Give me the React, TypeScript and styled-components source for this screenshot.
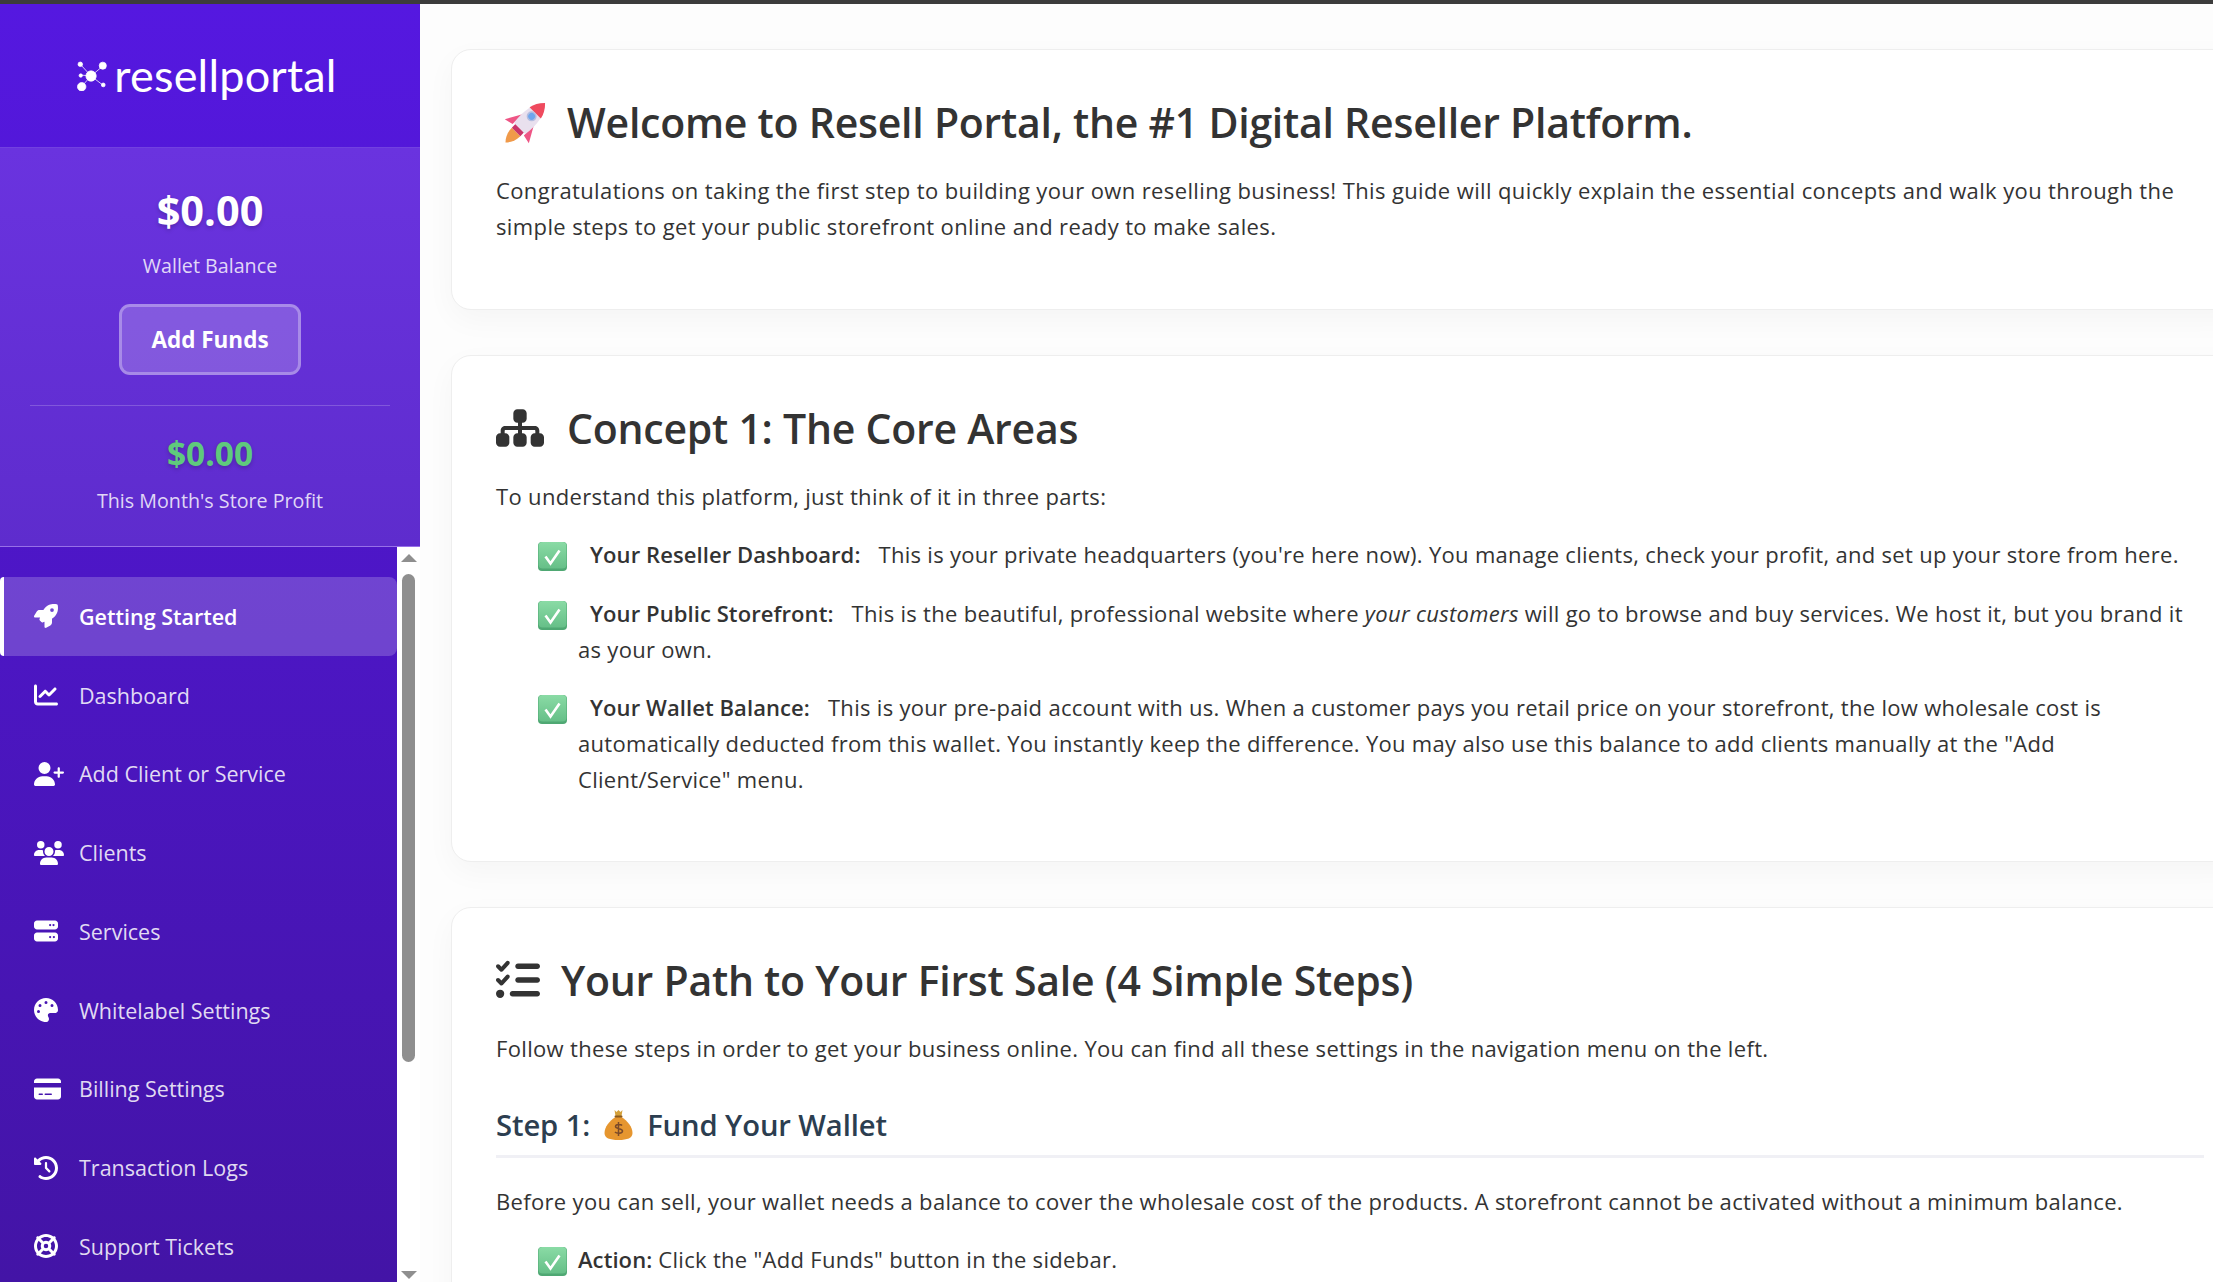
import React from 'react';
import styled, { createGlobalStyle } from 'styled-components';
import {
  FaRocket,
  FaChartLine,
  FaUserPlus,
  FaUsers,
  FaServer,
  FaPalette,
  FaCreditCard,
  FaClockRotateLeft,
  FaLifeRing,
  FaSitemap,
  FaListCheck,
} from 'react-icons/fa6';

const GlobalStyle = createGlobalStyle`
  html, body {
    margin: 0;
    padding: 0;
    height: 100%;
    overflow: hidden;
    background: #fff;
    font-family: "Open Sans", "Noto Sans", sans-serif;
  }
`;

const Page = styled.div`
  width: 2213px;
  height: 1282px;
  overflow: hidden;
  display: flex;
  flex-direction: column;
`;

const TopBar = styled.div`
  height: 4px;
  flex: none;
  background: #3c3c3c;
`;

const Body = styled.div`
  flex: 1;
  min-height: 0;
  display: flex;
`;

const Sidebar = styled.aside`
  width: 420px;
  flex: none;
  display: flex;
  flex-direction: column;
  background: linear-gradient(180deg, #5518e0 0%, #4314a6 100%);
`;

const LogoBar = styled.div`
  height: 144px;
  flex: none;
  display: flex;
  align-items: center;
  justify-content: center;
  gap: 7px;
  padding-right: 6px;
  box-sizing: border-box;
  border-bottom: 1px solid rgba(255, 255, 255, 0.18);
`;

const LogoText = styled.span`
  font-family: "Lato", sans-serif;
  font-weight: 400;
  font-size: 45px;
  line-height: 1;
  letter-spacing: 0.2px;
  color: #fff;
  margin-top: -1px;
`;

const WalletPanel = styled.section`
  height: 399px;
  flex: none;
  box-sizing: border-box;
  padding: 36px 30px 0;
  display: flex;
  flex-direction: column;
  align-items: center;
  background: linear-gradient(180deg, #6a33df 0%, #5e2ccd 100%);
  border-bottom: 1px solid rgba(255, 255, 255, 0.3);
  color: #fff;
`;

const Amount = styled.div<{ $green?: boolean }>`
  font-weight: 700;
  font-size: ${(p) => (p.$green ? '33.5px' : '41.5px')};
  line-height: ${(p) => (p.$green ? '44px' : '52px')};
  margin-bottom: ${(p) => (p.$green ? '12px' : '16px')};
  color: ${(p) => (p.$green ? '#5fca7c' : '#fff')};
  text-shadow: 0 2px 4px rgba(0, 0, 0, 0.2);
`;

const AmountLabel = styled.div`
  font-size: 19.7px;
  line-height: 28px;
  color: rgba(255, 255, 255, 0.82);
`;

const FundsButton = styled.button`
  margin-top: 24px;
  width: 182px;
  height: 71px;
  box-sizing: border-box;
  border: 3px solid rgba(255, 255, 255, 0.3);
  border-radius: 11px;
  background: rgba(255, 255, 255, 0.2);
  color: #fff;
  font: 700 22.5px "Open Sans", sans-serif;
`;

const PanelDivider = styled.hr`
  align-self: stretch;
  margin: 30px 0 25px;
  border: 0;
  border-top: 1px solid rgba(255, 255, 255, 0.2);
`;

const NavArea = styled.div`
  flex: 1;
  min-height: 0;
  display: flex;
`;

const NavList = styled.nav`
  flex: 1;
  padding-top: 30px;
  overflow: hidden;
`;

const NavItem = styled.a<{ $active?: boolean }>`
  height: 78.75px;
  box-sizing: border-box;
  display: flex;
  align-items: center;
  padding-left: ${(p) => (p.$active ? '30px' : '34px')};
  font-size: 21.5px;
  font-weight: ${(p) => (p.$active ? 600 : 400)};
  color: ${(p) => (p.$active ? '#fff' : 'rgba(255, 255, 255, 0.85)')};
  background: ${(p) => (p.$active ? 'rgba(255, 255, 255, 0.2)' : 'transparent')};
  border-left: ${(p) => (p.$active ? '4px solid #fff' : '0')};
  border-radius: ${(p) => (p.$active ? '4px 8px 8px 4px' : '0')};
`;

const IconSlot = styled.span<{ $iconWidth: number }>`
  width: 45px;
  flex: none;
  display: flex;
  align-items: center;
  color: #fff;

  svg {
    width: ${(p) => p.$iconWidth}px;
    height: 24px;
  }
`;

const ScrollTrack = styled.div`
  width: 23px;
  flex: none;
  background: #fff;
  display: flex;
  flex-direction: column;
  align-items: center;
  padding: 6px 0 2px;
  box-sizing: border-box;
`;

const ScrollThumb = styled.div`
  width: 13px;
  height: 488px;
  background: #8f8f8f;
  border-radius: 7px;
  margin-top: 11px;
`;

const ScrollSpacer = styled.div`
  flex: 1;
`;

const Main = styled.main`
  flex: 1;
  min-width: 0;
  overflow: hidden;
  background: #fdfdfd;
  padding: 45px 0 0 31px;
  color: #333;
`;

const Card = styled.section`
  width: 1798px;
  box-sizing: border-box;
  padding: 45px 44px;
  margin-bottom: 45px;
  background: #fff;
  border: 1px solid #eeeeee;
  border-radius: 20px;
  box-shadow: 0 10px 30px rgba(0, 0, 0, 0.035);
`;

const CardTitle = styled.h2<{ $gap: number }>`
  display: flex;
  align-items: center;
  gap: ${(p) => p.$gap}px;
  margin: 0 0 23px;
  height: 54px;
  font-size: 41px;
  font-weight: 600;
  letter-spacing: -0.25px;
  white-space: nowrap;
  color: #333;

  > svg {
    flex: none;
  }
`;

const Para = styled.p`
  margin: 0 0 22px;
  font-size: 22px;
  letter-spacing: 0.33px;
  line-height: 36px;
  white-space: nowrap;
  color: #333;
`;

const IntroPara = styled(Para)`
  margin-bottom: 20px;
  letter-spacing: 0.38px;
`;

const CheckList = styled.ul`
  list-style: none;
  margin: 0 0 19px;
  padding: 0 0 0 82px;
`;

const CheckItem = styled.li`
  position: relative;
  margin-bottom: 22.5px;
  font-size: 22px;
  letter-spacing: 0.3px;
  line-height: 36px;
  white-space: nowrap;
  color: #333;

  &:last-child {
    margin-bottom: 0;
  }
`;

const CheckMark = styled.svg`
  position: absolute;
  left: -40px;
  top: 6px;
  width: 29px;
  height: 29px;
`;

const Label = styled.strong<{ $spaced?: boolean }>`
  font-weight: 600;
  letter-spacing: 0.08px;
  margin-left: ${(p) => (p.$spaced ? '12px' : '0')};
  margin-right: ${(p) => (p.$spaced ? '18px' : '0')};
`;

const StepTitle = styled.h3`
  display: flex;
  align-items: center;
  gap: 14px;
  margin: 36px 0 25px;
  padding-bottom: 8px;
  box-sizing: border-box;
  border-bottom: 3px solid #f0f0f5;
  height: 56px;
  font-size: 29.2px;
  font-weight: 600;
  letter-spacing: -0.1px;
  color: #2c3e50;
  white-space: nowrap;
`;

const RocketSvg = styled.svg`
  margin-left: 9px;
  overflow: visible;
`;

const RocketEmoji = () => (
  <RocketSvg width="42" height="42" viewBox="0 0 42 42">
    <g transform="rotate(45 21 21)">
      <path d="M15 35h12c0 7-3 12-6 15-3-3-6-8-6-15z" fill="#f09a4a" />
      <path d="M13 18L4 34l9-2zM29 18l9 16-9-2z" fill="#ee5585" />
      <rect x="15" y="30" width="12" height="5" fill="#c9356a" />
      <path d="M21-6c8 8 10 20 8 36H13c-2-16 0-28 8-36z" fill="#e9e0ee" />
      <path d="M21-6c4.500 4.500 7 9 8 14H13c1-5 3.500-9.500 8-14z" fill="#ef4a5e" />
      <circle cx="21" cy="13" r="5" fill="#b3bde0" />
      <circle cx="21" cy="13" r="3.400" fill="#6ea6ee" />
    </g>
  </RocketSvg>
);

const MoneyBag = () => (
  <svg width="29" height="30" viewBox="0 0 28 30">
    <path d="M10 0l2 2 2-2 2 2 2-2-1 6h-6z" fill="#d4a03a" />
    <path d="M11 7C5 11 0 17 0 23c0 5 5 7 14 7s14-2 14-7c0-6-5-12-11-16z" fill="#e6962f" />
    <rect x="10" y="5.500" width="8" height="2" rx="1" fill="#8a5a20" />
    <path d="M14 12v14M17.500 15.500c-1-1.600-6.500-1.600-6.500 1s7 1.800 7 4.500-6 2.800-7.500 1" stroke="#7a4a2a" strokeWidth="1.500" fill="none" />
  </svg>
);

const Check = () => (
  <CheckMark viewBox="0 0 29 29">
    <defs>
      <linearGradient id="checkFill" x1="0" y1="0" x2="0" y2="1">
        <stop offset="0" stopColor="#8adba5" />
        <stop offset="1" stopColor="#66bf88" />
      </linearGradient>
    </defs>
    <rect x="0" y="0" width="29" height="29" rx="4" fill="#4fa873" />
    <rect x="0.500" y="0" width="28" height="26.500" rx="4" fill="url(#checkFill)" />
    <path d="M7.500 14.500l5 7 9-13" stroke="#fff" strokeWidth="2.600" fill="none" />
  </CheckMark>
);

const navItems = [
  { label: 'Getting Started', icon: FaRocket, iconWidth: 24, active: true },
  { label: 'Dashboard', icon: FaChartLine, iconWidth: 24 },
  { label: 'Add Client or Service', icon: FaUserPlus, iconWidth: 30 },
  { label: 'Clients', icon: FaUsers, iconWidth: 30 },
  { label: 'Services', icon: FaServer, iconWidth: 24 },
  { label: 'Whitelabel Settings', icon: FaPalette, iconWidth: 24 },
  { label: 'Billing Settings', icon: FaCreditCard, iconWidth: 27 },
  { label: 'Transaction Logs', icon: FaClockRotateLeft, iconWidth: 24 },
  { label: 'Support Tickets', icon: FaLifeRing, iconWidth: 24 },
];

export default function App() {
  return (
    <Page>
      <GlobalStyle />
      <TopBar />
      <Body>
        <Sidebar>
          <LogoBar>
            <svg width="30" height="30" viewBox="0 0 32 32">
              <g stroke="#fff" strokeWidth="0.8" fill="#fff">
                <line x1="15" y1="16" x2="4" y2="4" />
                <line x1="15" y1="16" x2="28" y2="5" />
                <line x1="15" y1="16" x2="5" y2="27" />
                <line x1="15" y1="16" x2="28" y2="26" />
                <line x1="15" y1="16" x2="4" y2="15" />
                <circle cx="15" cy="16" r="5.500" />
                <circle cx="3.500" cy="3.500" r="2.400" />
                <circle cx="27.500" cy="5" r="3.800" />
                <circle cx="5" cy="27.500" r="4.500" />
                <circle cx="28" cy="25.500" r="2" />
                <circle cx="4" cy="15.500" r="1.800" />
              </g>
            </svg>
            <LogoText>resellportal</LogoText>
          </LogoBar>
          <WalletPanel>
            <Amount>$0.00</Amount>
            <AmountLabel>Wallet Balance</AmountLabel>
            <FundsButton>Add Funds</FundsButton>
            <PanelDivider />
            <Amount $green>$0.00</Amount>
            <AmountLabel>This Month's Store Profit</AmountLabel>
          </WalletPanel>
          <NavArea>
            <NavList>
              {navItems.map((item) => (
                <NavItem key={item.label} $active={item.active}>
                  <IconSlot $iconWidth={item.iconWidth}>
                    <item.icon />
                  </IconSlot>
                  <span>{item.label}</span>
                </NavItem>
              ))}
            </NavList>
            <ScrollTrack>
              <svg width="18" height="10" viewBox="0 0 18 10">
                <path d="M9 1l8 8H1z" fill="#8f8f8f" />
              </svg>
              <ScrollThumb />
              <ScrollSpacer />
              <svg width="18" height="10" viewBox="0 0 18 10">
                <path d="M9 9L1 1h16z" fill="#8f8f8f" />
              </svg>
            </ScrollTrack>
          </NavArea>
        </Sidebar>
        <Main>
          <Card>
            <CardTitle $gap={20}>
              <RocketEmoji />
              Welcome to Resell Portal, the #1 Digital Reseller Platform.
            </CardTitle>
            <IntroPara>
              Congratulations on taking the first step to building your own reselling business! This guide will quickly explain the essential concepts and walk you through the
              <br />
              simple steps to get your public storefront online and ready to make sales.
            </IntroPara>
          </Card>
          <Card>
            <CardTitle $gap={23}>
              <FaSitemap size={48} />
              Concept 1: The Core Areas
            </CardTitle>
            <Para>To understand this platform, just think of it in three parts:</Para>
            <CheckList>
              <CheckItem>
                <Check />
                <Label $spaced>Your Reseller Dashboard:</Label>
                This is your private headquarters (you're here now). You manage clients, check your profit, and set up your store from here.
              </CheckItem>
              <CheckItem>
                <Check />
                <Label $spaced>Your Public Storefront:</Label>
                This is the beautiful, professional website where <em>your customers</em> will go to browse and buy services. We host it, but you brand it
                <br />
                as your own.
              </CheckItem>
              <CheckItem>
                <Check />
                <Label $spaced>Your Wallet Balance:</Label>
                This is your pre-paid account with us. When a customer pays you retail price on your storefront, the low wholesale cost is
                <br />
                automatically deducted from this wallet. You instantly keep the difference. You may also use this balance to add clients manually at the "Add
                <br />
                Client/Service" menu.
              </CheckItem>
            </CheckList>
          </Card>
          <Card>
            <CardTitle $gap={21}>
              <FaListCheck size={44} />
              Your Path to Your First Sale (4 Simple Steps)
            </CardTitle>
            <Para>Follow these steps in order to get your business online. You can find all these settings in the navigation menu on the left.</Para>
            <StepTitle>
              Step 1:
              <MoneyBag />
              Fund Your Wallet
            </StepTitle>
            <Para>Before you can sell, your wallet needs a balance to cover the wholesale cost of the products. A storefront cannot be activated without a minimum balance.</Para>
            <CheckList>
              <CheckItem>
                <Check />
                <Label>Action:</Label> Click the "Add Funds" button in the sidebar.
              </CheckItem>
            </CheckList>
          </Card>
        </Main>
      </Body>
    </Page>
  );
}
